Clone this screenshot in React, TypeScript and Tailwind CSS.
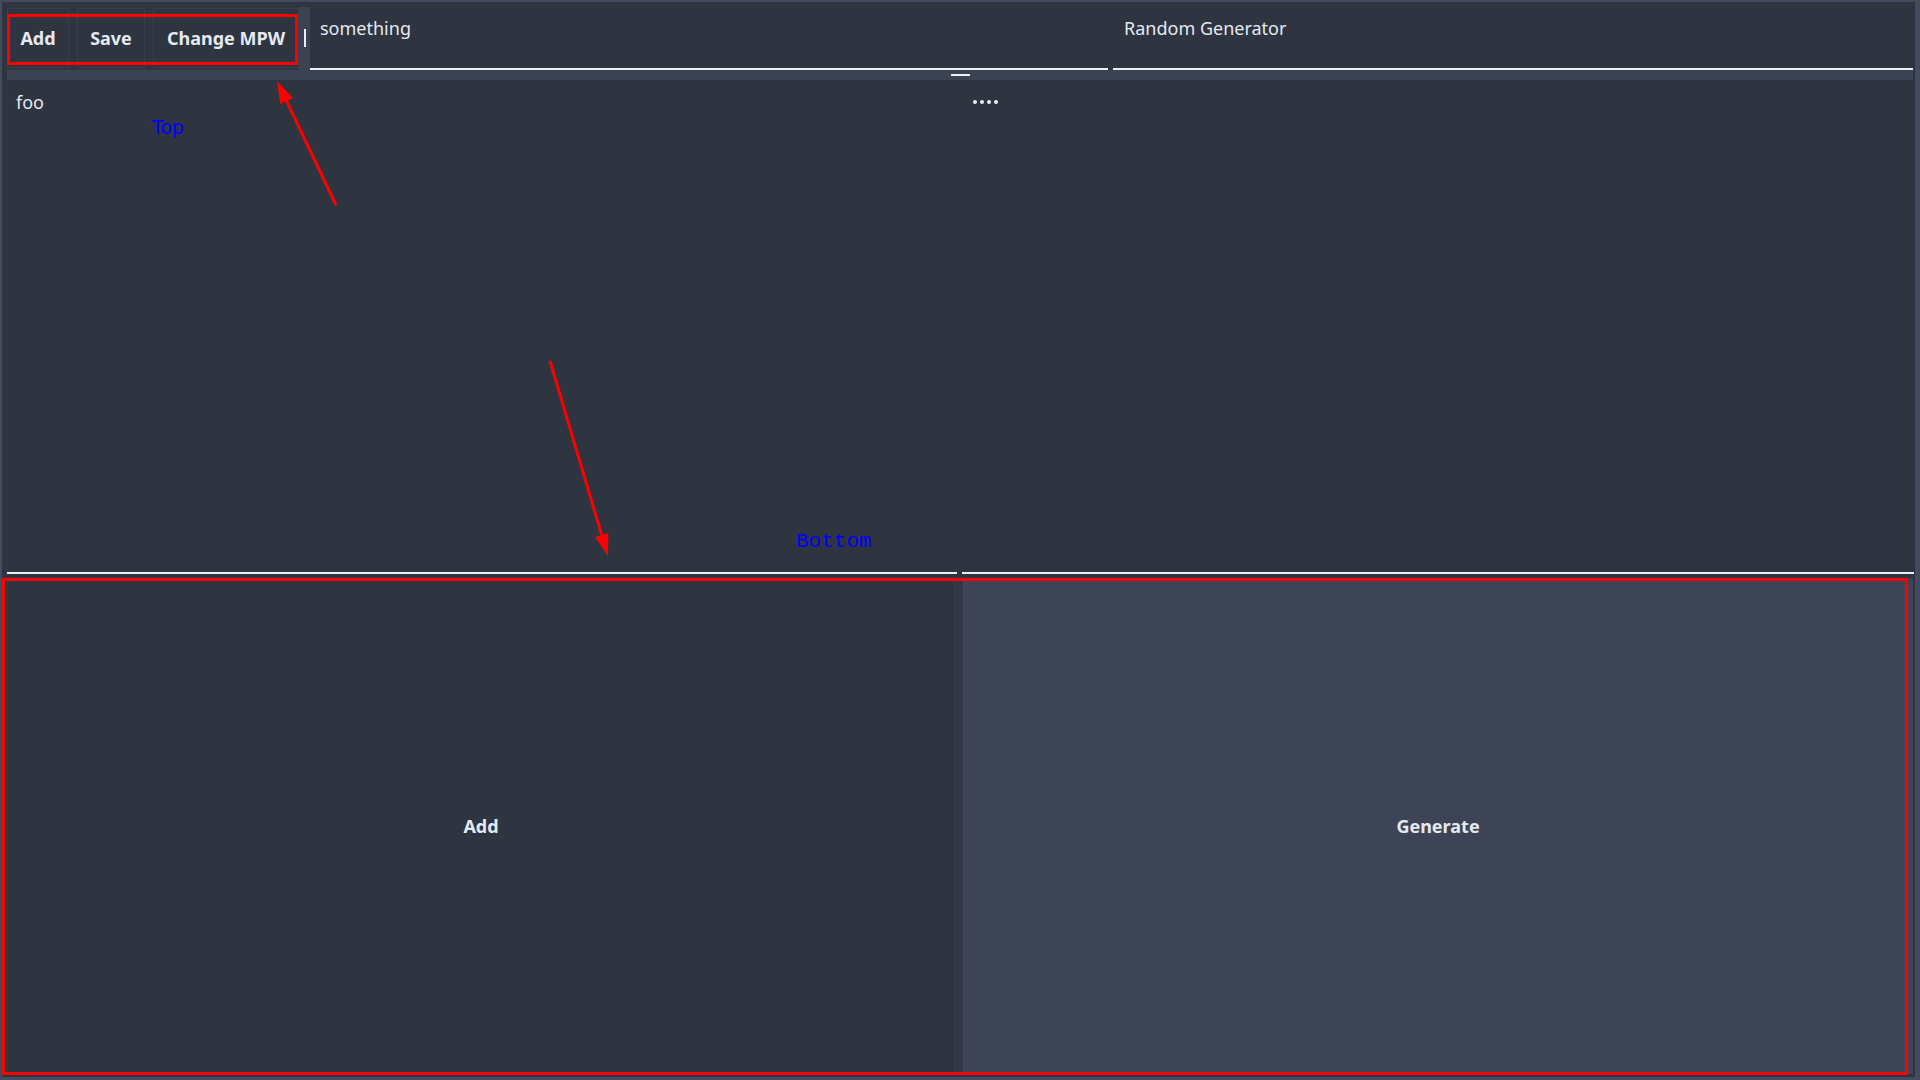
import React from "react";

// annotation arrows drawn over the window
function Arrows() {
  return (
    <svg className="pointer-events-none absolute left-0 top-0" width="1920" height="1080">
      <line x1="336" y1="205" x2="286.5" y2="100.9" stroke="#ff0000" strokeWidth="3" />
      <polygon points="277,81 292.8,97.9 280.2,103.9" fill="#ff0000" />
      <line x1="550" y1="361" x2="601.7" y2="534.9" stroke="#ff0000" strokeWidth="3" />
      <polygon points="608,556 608.4,532.9 595,536.9" fill="#ff0000" />
    </svg>
  );
}

export default function App() {
  const tools = [
    { label: "Add", w: "w-[62px]" },
    { label: "Save", w: "w-[68px]" },
    { label: "Change MPW", w: "w-[146px]" },
  ];

  return (
    <div className="relative h-[1080px] w-[1920px] overflow-hidden bg-[#434c5e] font-['Noto_Sans',sans-serif] text-[18px] text-[#e5e9f0]">
      <div className="ml-[2px] mt-[2px] flex h-[1075px] w-[1913px] flex-col bg-[#2e3440]">
        {/* toolbar + fields */}
        <div className="flex h-[68px]">
          <div className="flex gap-2 pl-[5px] pt-[6px]">
            {tools.map((t) => (
              <button
                key={t.label}
                className={`${t.w} h-[60px] border border-[#383e4b] bg-[#2e3440] text-center font-bold leading-none text-[#e5e9f0]`}
              >
                {t.label}
              </button>
            ))}
          </div>
          {/* caret strip */}
          <div className="mt-[5px] w-[11px] bg-[#3b4252] pl-[5px] pt-[22px]">
            <div className="h-[18px] w-[2px] bg-[#eceff4]" />
          </div>
          <div className="w-[798px] border-b-2 border-[#eceff4] pl-[10px] pt-[14px] leading-[25px]">something</div>
          <div className="w-[5px]" />
          <div className="w-[800px] border-b-2 border-[#eceff4] pl-[11px] pt-[14px] leading-[25px]">Random Generator</div>
        </div>

        {/* split grabber bar */}
        <div className="ml-[5px] flex h-[10px] w-[1906px] justify-center bg-[#3b4252] pt-[4px]">
          <div className="h-[2px] w-[19px] bg-[#eceff4]" />
        </div>

        {/* content panes */}
        <div className="flex h-[494px] pl-[5px]">
          <div className="relative w-[950px] border-b-2 border-[#eceff4] pl-[9px] pt-[10px] leading-[25px]">
            foo
            <span className="absolute left-[145px] top-[38px] font-['DejaVu_Sans',sans-serif] text-[19px] leading-none text-[#0000ff]">
              Top
            </span>
            <span className="absolute left-[789px] top-[451px] font-['Liberation_Mono',monospace] text-[21px] leading-none text-[#0000ff]">
              Bottom
            </span>
          </div>
          <div className="w-[5px]" />
          <div className="w-[952px] border-b-2 border-[#eceff4] pl-[11px] pt-[20px]">
            <div className="flex gap-[3px]">
              <span className="h-[4px] w-[4px] rounded-full bg-[#eceff4]" />
              <span className="h-[4px] w-[4px] rounded-full bg-[#eceff4]" />
              <span className="h-[4px] w-[4px] rounded-full bg-[#eceff4]" />
              <span className="h-[4px] w-[4px] rounded-full bg-[#eceff4]" />
            </div>
          </div>
        </div>

        {/* big action buttons */}
        <div className="mt-[4px] flex h-[496px] pl-[5px]">
          <button className="w-[948px] border border-[#363c49] bg-[#2e3440] font-bold text-[#e5e9f0]">Add</button>
          <div className="w-[8px] bg-[#323845]" />
          <button className="w-[950px] bg-[#3d4455] font-bold text-[#e5e9f0]">Generate</button>
        </div>
      </div>

      {/* red highlight boxes */}
      <div className="pointer-events-none absolute left-[7px] top-[14px] h-[51px] w-[291px] border-[3px] border-[#ff0000]" />
      <div className="pointer-events-none absolute left-[2px] top-[578px] h-[497px] w-[1906px] border-[3px] border-[#ff0000]" />
      <Arrows />
    </div>
  );
}
